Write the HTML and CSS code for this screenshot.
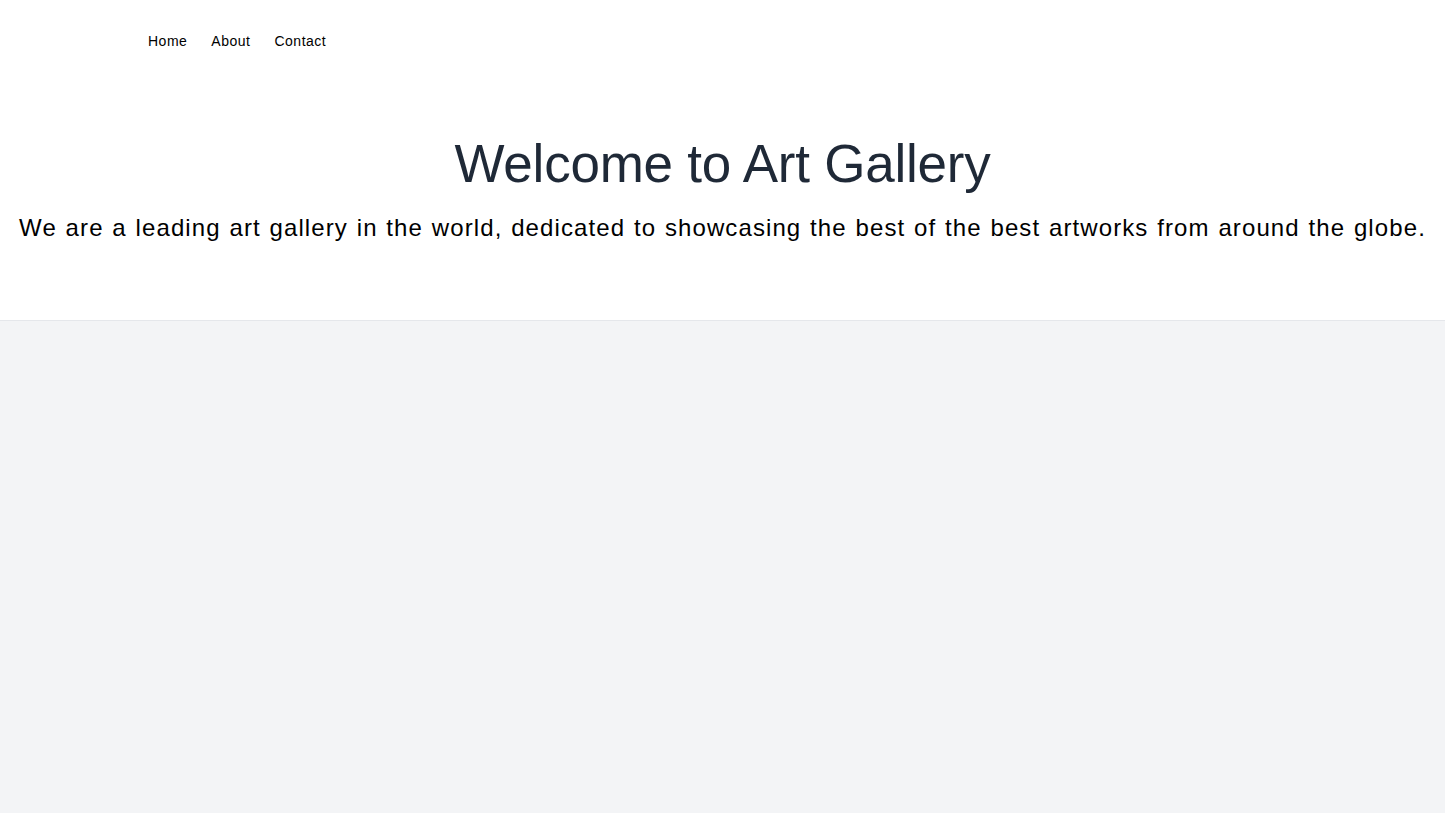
FILE: index.html
```html
<!DOCTYPE html>
<html lang="en">
<head>
<meta charset="utf-8">
<title>Art Gallery</title>
<link rel="stylesheet" href="styles.css">
</head>
<body>
<header class="site-header">
  <nav class="nav">
    <a class="nav-link" href="#">Home</a>
    <a class="nav-link" href="#">About</a>
    <a class="nav-link" href="#">Contact</a>
  </nav>
  <section class="hero">
    <h1 class="hero-title">Welcome to Art Gallery</h1>
    <p class="hero-text">We are a leading art gallery in the world, dedicated to showcasing the best of the best artworks from around the globe.</p>
  </section>
</header>
<main class="content"></main>
</body>
</html>
```

FILE: styles.css
```css
html, body {
  margin: 0;
  padding: 0;
}
body {
  background: #f3f4f6;
  font-family: "Liberation Sans", Arial, sans-serif;
  color: #000;
  min-height: 813px;
}
.site-header {
  background: #fff;
  border-bottom: 1px solid #e5e7eb;
  padding-bottom: 76px;
}
.nav {
  display: flex;
  gap: 24px;
  padding: 32px 0 0 148px;
}
.nav-link {
  color: #000;
  text-decoration: none;
  font-size: 14px;
  line-height: 18px;
  letter-spacing: 0.5px;
}
.hero {
  text-align: center;
  padding-top: 87px;
}
.hero-title {
  margin: 0;
  font-weight: 400;
  font-size: 53px;
  line-height: 53px;
  letter-spacing: -0.23px;
  color: #1f2937;
}
.hero-text {
  margin: 22px 0 0;
  font-size: 24px;
  line-height: 32px;
  letter-spacing: 1.1px;
  word-spacing: 1px;
}
```
